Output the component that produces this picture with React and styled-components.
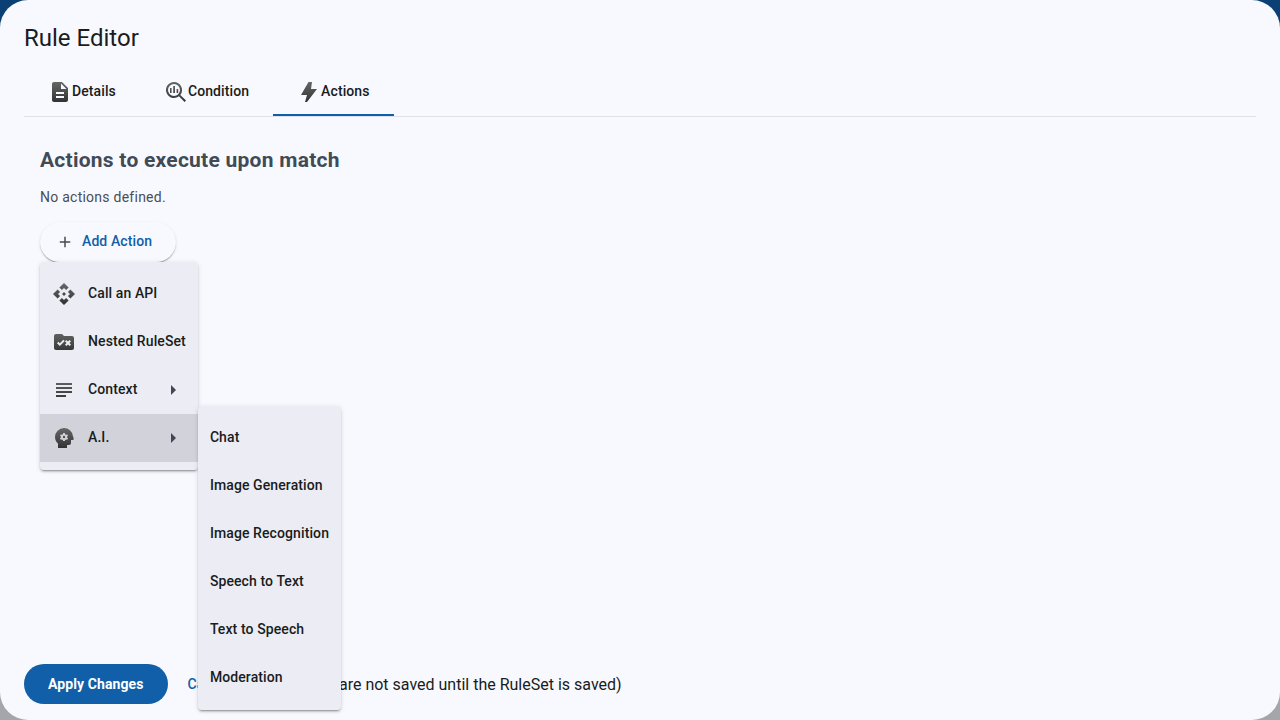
import React, { useId } from 'react';
import styled, { createGlobalStyle } from 'styled-components';
import { MdAdd, MdApi, MdDescription, MdRuleFolder, MdSubject } from 'react-icons/md';

const GlobalStyle = createGlobalStyle`
  * {
    box-sizing: border-box;
  }
  html,
  body,
  #root {
    height: 100%;
  }
  body {
    margin: 0;
    color: #191c20;
    font-family: Roboto, 'Open Sans', sans-serif;
    background: linear-gradient(#0b4074 50%, #a5a6aa 50%);
  }
  button {
    font-family: inherit;
    cursor: pointer;
  }
`;

const Dialog = styled.main`
  display: flex;
  flex-direction: column;
  height: 100%;
  background-color: #f8f9ff;
  border-radius: 28px;
  overflow: hidden;
`;

const Title = styled.h2`
  margin: 0;
  padding: 22px 24px 14px;
  font-size: 24px;
  line-height: 32px;
  font-weight: 400;
`;

const Content = styled.div`
  flex: 1;
  min-height: 0;
  padding: 0 24px;
`;

const TabList = styled.div`
  display: flex;
  height: 49px;
  border-bottom: 1px solid #dfe2eb;
`;

const Tab = styled.button`
  display: flex;
  align-items: center;
  padding: 0 24px;
  border: 0;
  background: none;
  color: #191c20;
  font-size: 14px;
  line-height: 20px;
  font-weight: 500;
  letter-spacing: 0.1px;
  box-shadow: ${({ $active }) => ($active ? 'inset 0 -2px #115fa8' : 'none')};
`;

const TabPanel = styled.section`
  padding: 29px 16px 0;
  letter-spacing: 0.25px;

  h3 {
    margin: 0;
    color: #414a55;
    font-size: 21px;
    line-height: 28px;
    font-weight: 700;
  }
  p {
    margin: 0;
    padding: 13px 0 15px;
    color: #4b4d54;
    font-size: 14px;
    line-height: 20px;
  }
`;

const MenuAnchor = styled.div`
  position: relative;
  width: fit-content;
`;

const AddButton = styled.button`
  display: flex;
  align-items: center;
  gap: 8px;
  height: 40px;
  padding: 0 24px 0 16px;
  border: 0;
  border-radius: 20px;
  background-color: #f8f9ff;
  color: #115fa8;
  font-size: 14px;
  line-height: 20px;
  font-weight: 500;
  letter-spacing: 0.1px;
  box-shadow: 0 2px 1px -1px rgba(0, 0, 0, 0.2), 0 1px 1px 0 rgba(0, 0, 0, 0.14),
    0 1px 3px 0 rgba(0, 0, 0, 0.12);
`;

const Label = styled.span`
  padding-bottom: 2px;
`;

const Menu = styled.div`
  position: absolute;
  top: ${({ $sub }) => ($sub ? '-8px' : '100%')};
  left: ${({ $sub }) => ($sub ? '100%' : '0')};
  z-index: 1;
  padding: 8px 0;
  border-radius: 4px;
  background-color: #ecedf4;
  box-shadow: 0 3px 1px -2px rgba(0, 0, 0, 0.2), 0 2px 2px 0 rgba(0, 0, 0, 0.14),
    0 1px 5px 0 rgba(0, 0, 0, 0.12);
`;

const MenuRow = styled.div`
  position: relative;
`;

const MenuItem = styled.button`
  display: flex;
  align-items: center;
  gap: 12px;
  width: 100%;
  height: 48px;
  padding: 0 12px;
  border: 0;
  background-color: ${({ $open }) => ($open ? '#d2d3da' : 'transparent')};
  color: #191c20;
  font-size: 14px;
  line-height: 20px;
  font-weight: 500;
  letter-spacing: 0.1px;
  white-space: nowrap;
`;

const Arrow = styled.svg`
  width: 5px;
  height: 10px;
  margin: 0 10px 0 auto;
  fill: #414752;
`;

const Actions = styled.footer`
  display: flex;
  align-items: center;
  padding: 16px 24px;
`;

const ApplyButton = styled.button`
  height: 40px;
  margin-right: 8px;
  padding: 0 24px;
  border: 0;
  border-radius: 20px;
  background-color: #115fa8;
  color: #ffffff;
  font-size: 14px;
  font-weight: 700;
  letter-spacing: 0.1px;
`;

const CancelButton = styled.button`
  height: 40px;
  margin-right: 24px;
  padding: 0 12px;
  border: 0;
  background: none;
  color: #115fa8;
  font-size: 14px;
  font-weight: 500;
  letter-spacing: 0.1px;
`;

const Note = styled.span`
  padding-top: 2px;
  font-size: 16px;
  line-height: 24px;
`;

const IconSvg = styled.svg`
  flex: none;
  width: 24px;
  height: 24px;
`;

const PlusIcon = styled(MdAdd)`
  width: 18px;
  height: 18px;
  color: #4a4a4a;
`;

// wraps an icon so that it is filled from light to dark grey
const Icon = ({ as: Glyph, children }) => {
  const id = useId();
  return (
    <IconSvg viewBox="0 0 24 24" aria-hidden="true">
      <defs>
        <linearGradient id={id} gradientUnits="userSpaceOnUse" x1="0" y1="2" x2="0" y2="22">
          <stop offset="0" stopColor="#666666" />
          <stop offset="1" stopColor="#333333" />
        </linearGradient>
      </defs>
      <g fill={`url(#${id})`}>
        {Glyph ? <Glyph size={24} fill={`url(#${id})`} stroke="none" /> : children}
      </g>
    </IconSvg>
  );
};

const ConditionIcon = () => (
  <Icon>
    <path
      fillRule="evenodd"
      d="M10 2a8 8 0 1 0 4.9 14.3l5.7 5.7 1.4-1.4-5.7-5.7A8 8 0 0 0 10 2zm0 2a6 6 0 1 1 0 12 6 6 0 0 1 0-12z"
    />
    <path d="M6 8h1.6v5H6zM9.2 6h1.8v7H9.2zM12.6 9h1.6v4h-1.6z" />
  </Icon>
);

const BoltIcon = () => (
  <Icon>
    <path d="M11.5 2H15l-1 7h6L10 22H8l2-7H4z" />
  </Icon>
);

const HeadIcon = () => (
  <Icon>
    <path
      fillRule="evenodd"
      d="M12 2a9 9 0 0 0-9 9c0 2.8 1.2 5 3 6.6V22h9v-3h2a2 2 0 0 0 2-2v-3h1.6c.9 0 1.4-.8 1.1-1.5L20.9 10A9 9 0 0 0 12 2zM11.2 7h1.6l.3 1.2.9.5 1.2-.3.8 1.4-.9.8v.9l.9.8-.8 1.4-1.2-.3-.9.5-.3 1.1h-1.6l-.3-1.1-.9-.5-1.2.3-.8-1.4.9-.8v-.9L8 9.8l.8-1.4 1.2.3.9-.5z"
    />
    <circle cx="12" cy="11" r="1.2" />
  </Icon>
);

const menuItems = [
  { label: 'Call an API', icon: <Icon as={MdApi} /> },
  { label: 'Nested RuleSet', icon: <Icon as={MdRuleFolder} /> },
  { label: 'Context', icon: <Icon as={MdSubject} />, nested: true },
  {
    label: 'A.I.',
    icon: <HeadIcon />,
    nested: true,
    items: [
      'Chat',
      'Image Generation',
      'Image Recognition',
      'Speech to Text',
      'Text to Speech',
      'Moderation',
    ],
  },
];

const App = () => {
  return (
    <>
      <GlobalStyle />
      <Dialog>
        <Title>Rule Editor</Title>
        <Content>
          <TabList role="tablist">
            <Tab role="tab">
              <Icon as={MdDescription} />
              <Label>Details</Label>
            </Tab>
            <Tab role="tab">
              <ConditionIcon />
              <Label>Condition</Label>
            </Tab>
            <Tab role="tab" aria-selected="true" $active>
              <BoltIcon />
              <Label>Actions</Label>
            </Tab>
          </TabList>
          <TabPanel>
            <h3>Actions to execute upon match</h3>
            <p>No actions defined.</p>
            <MenuAnchor>
              <AddButton>
                <PlusIcon />
                <Label>Add Action</Label>
              </AddButton>
              <Menu role="menu">
                {menuItems.map(({ label, icon, nested, items }) => (
                  <MenuRow key={label}>
                    <MenuItem role="menuitem" $open={!!items}>
                      {icon}
                      <Label>{label}</Label>
                      {nested && (
                        <Arrow viewBox="0 0 5 10">
                          <path d="M0 0l5 5-5 5z" />
                        </Arrow>
                      )}
                    </MenuItem>
                    {items && (
                      <Menu role="menu" $sub>
                        {items.map((item) => (
                          <MenuItem key={item} role="menuitem">
                            <Label>{item}</Label>
                          </MenuItem>
                        ))}
                      </Menu>
                    )}
                  </MenuRow>
                ))}
              </Menu>
            </MenuAnchor>
          </TabPanel>
        </Content>
        <Actions>
          <ApplyButton>Apply Changes</ApplyButton>
          <CancelButton>Cancel</CancelButton>
          <Note>(Changes are not saved until the RuleSet is saved)</Note>
        </Actions>
      </Dialog>
    </>
  );
};

export default App;
